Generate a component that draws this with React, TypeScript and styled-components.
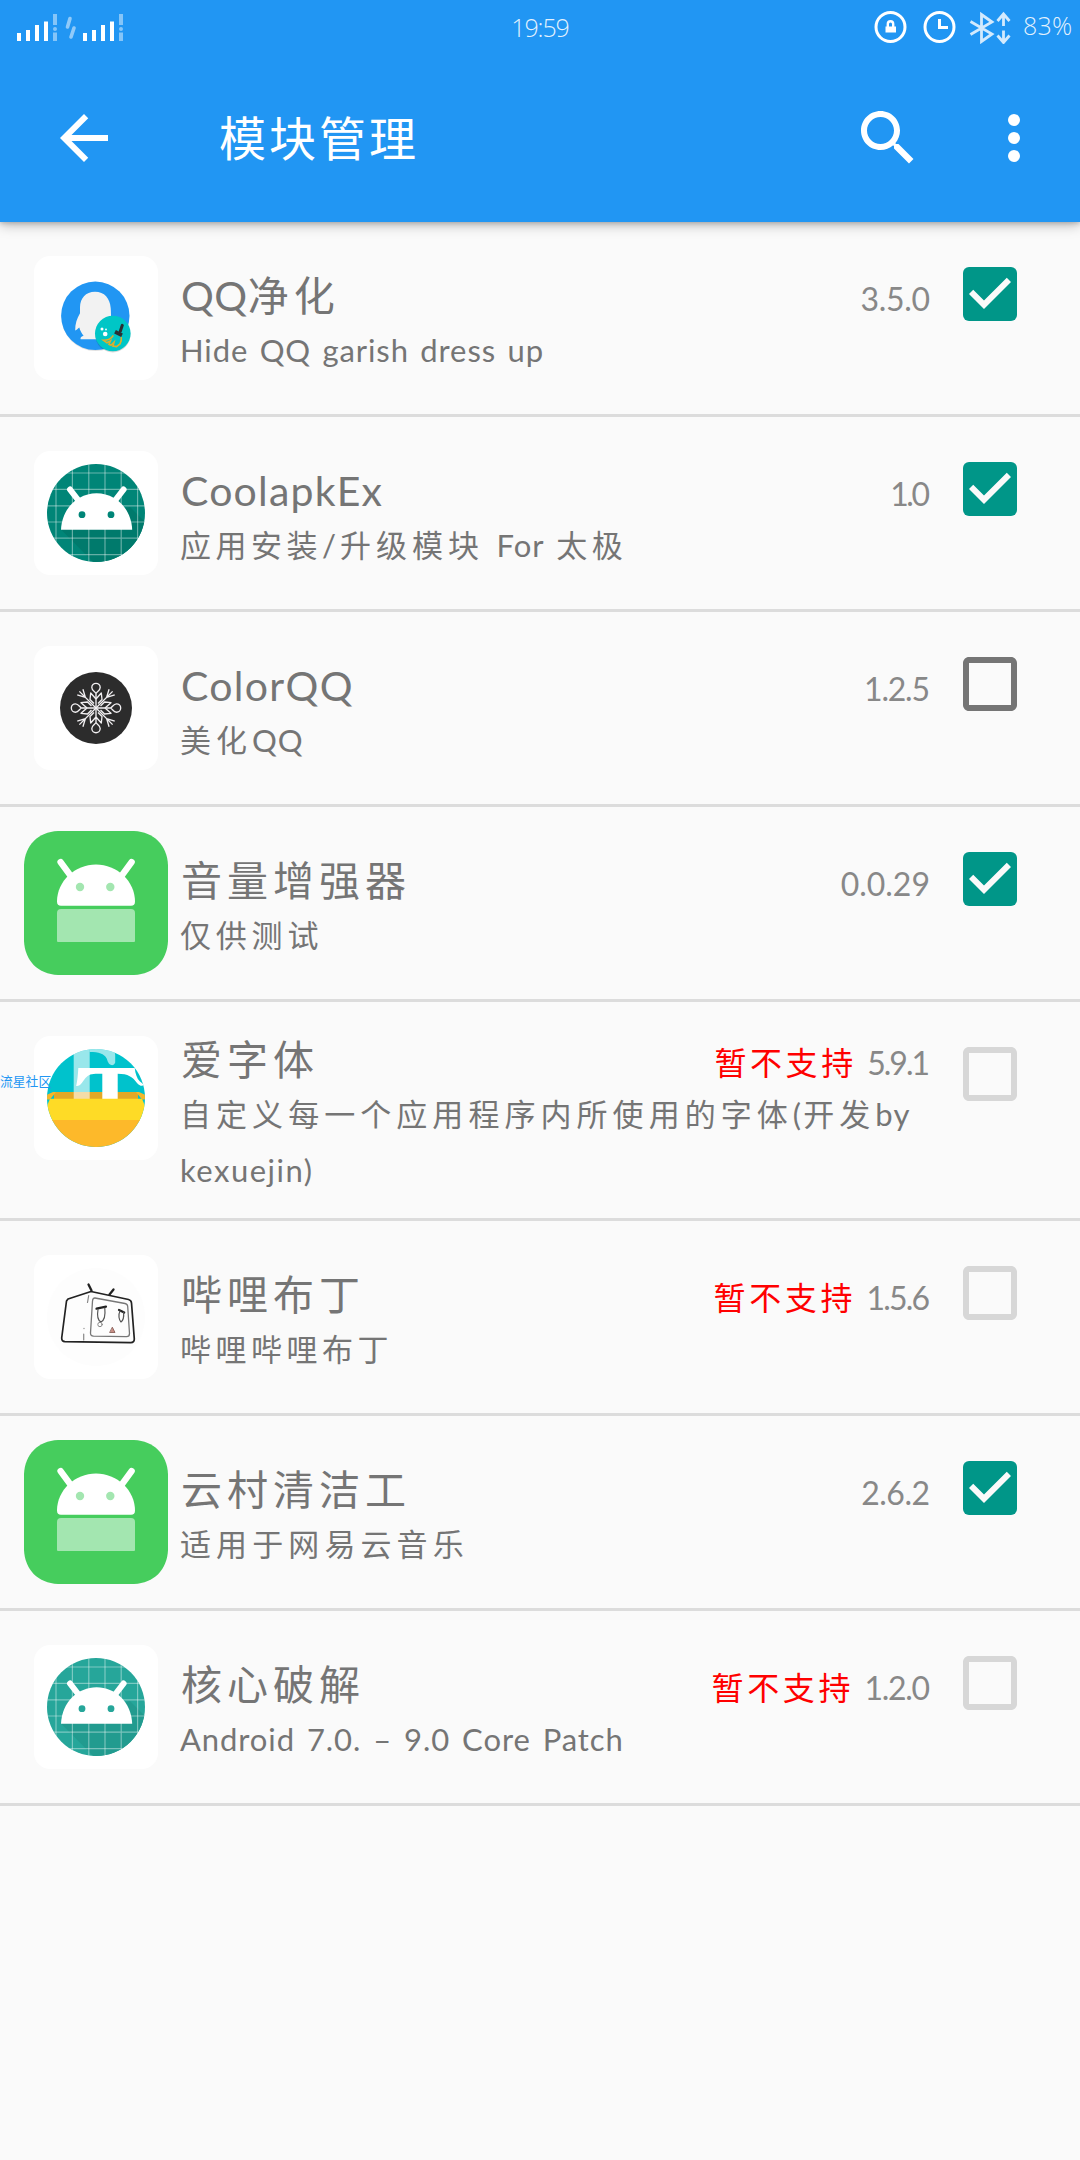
import React from 'react';
import styled, { createGlobalStyle } from 'styled-components';

const GlobalStyle = createGlobalStyle`
  *, *::before, *::after { box-sizing: border-box; }
  html, body { margin: 0; padding: 0; background: #fafafa; }
  body { font-family: 'Lato', 'Noto Sans CJK SC', sans-serif; font-weight: 400; }
  svg { display: block; flex: none; }
`;

const Screen = styled.div`
  width: 1080px;
  min-height: 2160px;
  background: #fafafa;
  display: flex;
  flex-direction: column;
  overflow: hidden;
`;

const Header = styled.header`
  height: 222px;
  background: #2196f3;
  color: #fff;
  box-shadow: 0 3px 12px rgba(0, 0, 0, 0.26), 0 1px 5px rgba(0, 0, 0, 0.2);
  position: relative;
  z-index: 1;
`;

const StatusBar = styled.div`
  height: 54px;
  display: grid;
  grid-template-columns: 1fr auto 1fr;
  align-items: center;
  padding: 0 6px;
`;

const StatusGroup = styled.div<{ $end?: boolean }>`
  display: flex;
  align-items: center;
  justify-content: ${(p) => (p.$end ? 'flex-end' : 'flex-start')};
  padding-left: ${(p) => (p.$end ? 0 : 10)}px;
`;

const StatusText = styled.span<{ $spacing: number }>`
  font-family: 'Open Sans', 'Noto Sans', sans-serif;
  font-weight: 300;
  font-size: 25px;
  letter-spacing: ${(p) => p.$spacing}px;
  line-height: 54px;
  color: rgba(255, 255, 255, 0.88);
`;

const Battery = styled(StatusText)`
  margin: -4px 0 0 11px;
  width: 51px;
  white-space: nowrap;
`;

const Toolbar = styled.div`
  height: 168px;
  display: flex;
  align-items: center;
  padding: 0 30px 0 48px;
`;

const ToolbarTitle = styled.h1`
  flex: 1;
  margin: 0 0 0 99px;
  font-size: 47px;
  font-weight: 400;
  letter-spacing: 3px;
  line-height: 72px;
`;

const IconButton = styled.button<{ $gap?: number }>`
  border: 0;
  padding: 0;
  margin: 0 0 0 ${(p) => p.$gap ?? 0}px;
  background: none;
  color: inherit;
  width: 72px;
  height: 72px;
`;

const List = styled.ul`
  list-style: none;
  margin: 0;
  padding: 0;
`;

const Row = styled.li`
  position: relative;
  display: flex;
  align-items: flex-start;
  min-height: 195px;
  border-bottom: 3px solid #dcdcdc;
  padding-left: 24px;
`;

const IconSlot = styled.div`
  width: 144px;
  height: 144px;
  margin: 24px 0;
  flex: none;
`;

const TextColumn = styled.div`
  align-self: center;
  width: 750px;
  margin-left: 12px;
  padding: 28px 0 20px;
  color: #757575;
`;

const TitleLine = styled.div`
  display: flex;
  align-items: baseline;
  justify-content: space-between;
  height: 56px;
  line-height: 60px;
`;

const Title = styled.span`
  font-size: 41px;
  padding-left: 1px;
`;

const Meta = styled.span`
  display: flex;
  align-items: baseline;
  gap: 14px;
  font-size: 32px;
  white-space: nowrap;
`;

const Warning = styled.span`
  color: #ff0000;
  letter-spacing: 3.600px;
  margin-right: -3.600px;
`;

const Version = styled.span<{ $spacing: number }>`
  color: #888;
  letter-spacing: ${(p) => p.$spacing}px;
  margin-right: ${(p) => -p.$spacing}px;
`;

const Description = styled.p`
  margin: 0;
  font-size: 31px;
`;

const Line = styled.span`
  display: block;
  height: 56px;
  line-height: 56px;
  white-space: pre;
`;

const Run = styled.span<{ $spacing: number; $word?: number }>`
  letter-spacing: ${(p) => p.$spacing}px;
  word-spacing: ${(p) => p.$word ?? 0}px;
`;

const CheckSlot = styled.div`
  width: 72px;
  height: 72px;
  margin: 36px 0 0 24px;
`;

const Watermark = styled.span`
  position: absolute;
  left: 0;
  top: 70px;
  font-size: 12.800px;
  line-height: 18px;
  color: #2196f3;
`;

const Signal = () => (
  <>
    <rect x="1" y="22" width="4" height="8" />
    <rect x="10" y="19" width="4" height="11" />
    <rect x="19" y="14" width="4" height="16" />
    <rect x="28" y="10.5" width="4" height="19.5" />
    <g opacity="0.45">
      <rect x="37" y="3" width="4" height="11" />
      <circle cx="39" cy="18" r="2" />
      <rect x="37" y="21.5" width="4" height="8.5" />
    </g>
  </>
);

const SignalIcons = () => (
  <svg width="112" height="32" viewBox="0 0 112 32" fill="#fff">
    <Signal />
    <path d="M54 7.5 51.500 16M58 17 55 26" stroke="#fff" strokeWidth="3.6" strokeLinecap="round" opacity="0.5" />
    <g transform="translate(66 0)">
      <Signal />
    </g>
  </svg>
);

const StatusIcons = () => (
  <svg width="140" height="34" viewBox="0 0 140 34" fill="none" stroke="#fff">
    <circle cx="18.5" cy="17" r="14.5" strokeWidth="3" />
    <path d="M15.8 17v-3a2.700 2.700 0 0 1 5.400 0v3" strokeWidth="2.4" />
    <rect x="13.5" y="16.5" width="10.5" height="6" fill="#fff" stroke="none" />
    <circle cx="67.5" cy="17" r="14.5" strokeWidth="3" />
    <path d="M67.5 9v8.500h8.500" strokeWidth="3" />
    <g stroke="#d3eafd" strokeWidth="2.8">
      <path d="M98.5 11.500 120 24 109.500 31.500V4.500L120 12 98.500 24.500" />
      <path d="M131.5 16V4.500M125.500 11l6-7 6 7M131.500 20.500V32M125.500 25.500l6 7 6-7" />
    </g>
  </svg>
);

const BackIcon = () => (
  <svg width="72" height="72" viewBox="0 0 24 24" fill="currentColor">
    <path d="M20 11H7.830l5.590-5.590L12 4l-8 8 8 8 1.410-1.410L7.830 13H20v-2z" />
  </svg>
);

const SearchIcon = () => (
  <svg width="72" height="72" viewBox="0 0 24 24" fill="currentColor">
    <path d="M15.500 14h-.79l-.28-.27C15.410 12.590 16 11.110 16 9.500 16 5.910 13.090 3 9.500 3S3 5.910 3 9.500 5.910 16 9.500 16c1.610 0 3.090-.59 4.230-1.570l.27.28v.79l5 4.990L20.490 19l-4.990-5zm-6 0C7.010 14 5 11.990 5 9.500S7.010 5 9.500 5 14 7.010 14 9.500 11.990 14 9.500 14z" />
  </svg>
);

const MoreIcon = () => (
  <svg width="72" height="72" viewBox="0 0 24 24" fill="currentColor">
    <circle cx="12" cy="6" r="2" />
    <circle cx="12" cy="12" r="2" />
    <circle cx="12" cy="18" r="2" />
  </svg>
);

type CheckState = 'on' | 'off' | 'disabled';

const Checkbox = ({ state }: { state: CheckState }) => (
  <svg width="72" height="72" viewBox="0 0 24 24" role="checkbox" aria-checked={state === 'on'}>
    {state === 'on' ? (
      <>
        <rect x="3" y="3" width="18" height="18" rx="2" fill="#009688" />
        <path d="M10 17l-5-5 1.410-1.410L10 14.170l7.590-7.590L19 8z" fill="#fafafa" />
      </>
    ) : (
      <path
        d="M19 5v14H5V5h14m0-2H5c-1.100 0-2 .9-2 2v14c0 1.100.9 2 2 2h14c1.100 0 2-.9 2-2V5c0-1.100-.9-2-2-2z"
        fill={state === 'off' ? '#757575' : '#d7d7d7'}
      />
    )}
  </svg>
);

const Plate = () => <rect x="10" y="10" width="124" height="124" rx="16" fill="#fff" stroke="none" />;

const PenguinIcon = () => (
  <svg width="144" height="144" viewBox="0 0 144 144">
    <Plate />
    <ellipse cx="71.5" cy="71.5" rx="33.8" ry="33.5" fill="#000" opacity="0.12" />
    <circle cx="71.3" cy="69.8" r="34.2" fill="#2196f3" />
    <path d="M71 45.800c-9.500 0-14.800 6.500-15 15.500v6C53 72.500 51 78 51.200 84.500c1.500-.5 2.700-2 4.100-3 1 3.500 2.400 6 4.300 8.300-1.700.5-3.700 1.800-3 3.500h25L87 70.500c0-2 0-5-.3-8.500C86 52.500 80.500 45.800 71 45.800z" fill="#f2f2f2" />
    <circle cx="88.8" cy="88.8" r="17.6" fill="#000" opacity="0.15" />
    <circle cx="88.8" cy="87.5" r="17.8" fill="#00c6c6" />
    <path d="M98.300 79.300l-2 6" stroke="#2b2f33" strokeWidth="3" strokeLinecap="round" />
    <path d="M91 85.800l7 3.400" stroke="#2b2f33" strokeWidth="3.8" />
    <path d="M89.300 89.300c-2 3.500-5.500 5-9.800 5l3.500 2.500 3.500-2-1.500 3.500 2 1 3-3-1 3.700 3.500.6 3.500-2.600c1.300-2.500 1.600-4.500 1.300-6.800" fill="none" stroke="#dfae2c" strokeWidth="1.6" />
    <circle cx="78" cy="83" r="1.5" fill="#fff" />
    <circle cx="82" cy="83.5" r=".9" fill="#fff" />
    <circle cx="81.2" cy="88" r="2.3" fill="#fff" />
  </svg>
);

const gridLines = [32, 48.4, 64.8, 81, 97.2, 113.6];

const DroidGridIcon = ({ color, shade, id }: { color: string; shade: string; id: string }) => (
  <svg width="144" height="144" viewBox="0 0 144 144">
    <clipPath id={id}>
      <circle cx="72" cy="72" r="49" />
    </clipPath>
    <Plate />
    <g clipPath={`url(#${id})`}>
      <rect x="20" y="20" width="104" height="104" fill={color} />
      <path d="M37 88.500 72 124h52V84l-18-18z" fill={shade} />
      {gridLines.map((v) => (
        <path key={v} d={`M${v} 20v104M20 ${v}h104`} stroke="#fff" strokeOpacity="0.4" strokeWidth="1.2" />
      ))}
    </g>
    <path d="M46 48.500l8.500 11M99.600 48.500l-8.500 11" stroke="#fff" strokeWidth="6" strokeLinecap="round" />
    <path d="M37 88.700C38 67 54 52.300 72.600 52.300S107.200 67 108.200 88.700z" fill="#fff" />
    <circle cx="58" cy="73.7" r="3.4" fill={color} />
    <circle cx="87" cy="73.7" r="3.4" fill={color} />
  </svg>
);

const SnowflakeIcon = () => (
  <svg width="144" height="144" viewBox="0 0 144 144">
    <Plate />
    <circle cx="72" cy="72" r="36" fill="#2c2c2c" />
    <g transform="translate(72 72)" fill="none" stroke="#f1eff1" strokeWidth="1.35" strokeLinejoin="round">
      {[0, 90, 180, 270].map((angle) => (
        <g key={angle} transform={`rotate(${angle})`}>
          <path d="M0 0V-14.500C-1-16.500-4.200-17.500-4.200-20.500a4.200 4.200 0 0 1 8.400 0C4.200-17.500 1-16.500 0-14.500" />
          <path d="M0-9-5.300-15-6-8.500-2-4.500M0-9 5.300-15 6-8.500 2-4.500" />
          <g transform="rotate(45)">
            <path d="M0 0V-23.500M0-15-4-22.500M0-15 4-22.500" />
          </g>
        </g>
      ))}
    </g>
  </svg>
);

const DroidGreenIcon = () => (
  <svg width="144" height="144" viewBox="0 0 144 144">
    <path d="M34 0H110C130 1 143 14 144 34V110C143 130 130 143 110 144H34C14 143 1 130 0 110V34C1 14 14 1 34 0z" fill="#46cd5d" />
    <path d="M36.600 31.200l11 15M107.600 31.200l-11 15" stroke="#fff" strokeWidth="6.4" strokeLinecap="round" />
    <path d="M37 74.700a4 4 0 0 1-4-4C33 50 51 33.500 72 33.500S111 50 111 70.700a4 4 0 0 1-4 4z" fill="#fff" />
    <circle cx="56" cy="56" r="4.2" fill="#a3e6b0" />
    <circle cx="86.3" cy="56" r="4.2" fill="#a3e6b0" />
    <path d="M33 82a4 4 0 0 1 4-4h70a4 4 0 0 1 4 4v28a1 1 0 0 1-1 1H34a1 1 0 0 1-1-1z" fill="#a3e6b0" />
  </svg>
);

const FontBoxIcon = () => (
  <svg width="144" height="144" viewBox="0 0 144 144">
    <clipPath id="fontbox">
      <circle cx="72" cy="72" r="49" />
    </clipPath>
    <Plate />
    <g clipPath="url(#fontbox)">
      <rect x="20" y="20" width="104" height="104" fill="#00c2cc" />
      <rect x="30" y="66" width="84" height="8" fill="#e3a826" />
      <path d="M20 70l9-4h3l-6 7.500h-6zM124 70l-9-4h-3l6 7.500h6z" fill="#f5b72a" />
      <path d="M49.700 20h16V73h-16z" fill="#fff" opacity="0.6" />
      <path d="M65.700 20H82c6 2 9 5 9.200 9v7.500c-.5 2-2.500 3-4 2.500-3-1-3.500-4-4.500-6.500C80 27.500 75 26 65.700 26z" fill="#fff" opacity="0.6" />
      <path d="M54.300 42H110.700c.7 6 2.300 10.500 5 13.300l4.300 3.500c-1.500 1.800-4.500 1.200-7-1.800C109 51 104 47.700 93.700 47.700V73.200H78.300V47.700c-6 0-9-.2-12 .8-4 1.500-6 5-8.500 8.500-1.500 2.200-3.500 3.300-5.600 3C53.500 54 54 48 54.300 42z" fill="#fff" />
      <path d="M26 72.700h92l3.500 8.500V95h-99V81.200z" fill="#fedb26" />
      <rect x="20" y="94" width="104" height="30" fill="#fdb92a" />
    </g>
  </svg>
);

const TvIcon = () => (
  <svg width="144" height="144" viewBox="0 0 144 144" fill="none" stroke="#222" strokeLinecap="round" strokeLinejoin="round">
    <Plate />
    <circle cx="72" cy="72" r="49" fill="#fdfdfd" stroke="none" />
    <path d="M44 54 67 46.500 104.500 54.500q2.800.8 3 3.500L110.300 94q0 3.500-3.500 3.700L41 96.700q-3.400-.3-3.300-3.700L42.500 56z" strokeWidth="1.7" />
    <path d="M64.500 39.500l3 6M89.500 44.500l-4 5" strokeWidth="2.3" />
    <path d="M71 53l30 5.500q2.500.5 2.700 3l1.800 27q0 3.200-3 3.200l-33-.6q-3.200-.2-3-3.200l2-31.900q.3-3.200 2.500-3z" stroke="#777" strokeWidth="1.3" />
    <path d="M72.500 63.700l9.500-2M95 65l5.200 2.500" strokeWidth="2.2" />
    <path d="M74 64.500c-1 6 0 11 3 12.500 3-1.500 4.500-7 3.800-14M96 66c-2 4-1 9 1 11 2-1.500 3-6 2.500-10" stroke="#555" strokeWidth="1.2" />
    <circle cx="76" cy="79.5" r="2.2" stroke="#888" strokeWidth="1" />
    <path d="M88.500 82.500l2.500 5h-5z" fill="#c98f85" stroke="#80554e" strokeWidth="0.8" />
    <path d="M64.700 50.500l-1.200 7M60 83.300v.3M59.700 89v6" stroke="#888" strokeWidth="1.2" />
  </svg>
);

interface Part {
  text: string;
  spacing: number;
  word?: number;
}

interface Module {
  icon: React.ReactNode;
  title: Part[];
  description: Part[][];
  version: string;
  versionSpacing: number;
  state: CheckState;
  watermark?: string;
}

const modules: Module[] = [
  {
    icon: <PenguinIcon />,
    title: [{ text: 'QQ', spacing: 0.5 }, { text: '净化', spacing: 5 }],
    description: [[{ text: 'Hide QQ garish dress up', spacing: 0.9, word: 2.6 }]],
    version: '3.5.0', versionSpacing: -0.3, state: 'on',
  },
  {
    icon: <DroidGridIcon id="droid-dark" color="#008577" shade="#007a6c" />,
    title: [{ text: 'CoolapkEx', spacing: 1.2 }],
    description: [[
      { text: '应用安装', spacing: 4.5 }, { text: '/', spacing: 4 }, { text: '升级模块', spacing: 5 },
      { text: ' For ', spacing: 1, word: 3.5 }, { text: '太极', spacing: 4.5 },
    ]],
    version: '1.0', versionSpacing: -2.5, state: 'on',
  },
  {
    icon: <SnowflakeIcon />,
    title: [{ text: 'ColorQQ', spacing: 1.3 }],
    description: [[{ text: '美化', spacing: 5 }, { text: 'QQ', spacing: 1 }]],
    version: '1.2.5', versionSpacing: -1.2, state: 'off',
  },
  {
    icon: <DroidGreenIcon />,
    title: [{ text: '音量增强器', spacing: 5 }],
    description: [[{ text: '仅供测试', spacing: 4.8 }]],
    version: '0.0.29', versionSpacing: 0, state: 'on',
  },
  {
    icon: <FontBoxIcon />,
    title: [{ text: '爱字体', spacing: 5 }],
    description: [
      [
        { text: '自定义每一个应用程序内所使用的字体', spacing: 5.05 }, { text: '(', spacing: 2 },
        { text: '开发', spacing: 5 }, { text: 'by', spacing: 1.5 },
      ],
      [{ text: 'kexuejin)', spacing: 1.5 }],
    ],
    version: '5.9.1', versionSpacing: -2, state: 'disabled', watermark: '流星社区',
  },
  {
    icon: <TvIcon />,
    title: [{ text: '哔哩布丁', spacing: 5 }],
    description: [[{ text: '哔哩哔哩布丁', spacing: 4.5 }]],
    version: '1.5.6', versionSpacing: -1.8, state: 'disabled',
  },
  {
    icon: <DroidGreenIcon />,
    title: [{ text: '云村清洁工', spacing: 5 }],
    description: [[{ text: '适用于网易云音乐', spacing: 5.1 }]],
    version: '2.6.2', versionSpacing: -0.5, state: 'on',
  },
  {
    icon: <DroidGridIcon id="droid-light" color="#26a69a" shade="#229b8f" />,
    title: [{ text: '核心破解', spacing: 5 }],
    description: [[{ text: 'Android 7.0. – 9.0 Core Patch', spacing: 0.9, word: 3.2 }]],
    version: '1.2.0', versionSpacing: -1.3, state: 'disabled',
  },
];

const Parts = ({ parts }: { parts: Part[] }) => (
  <>
    {parts.map((part, i) => (
      <Run key={i} $spacing={part.spacing} $word={part.word}>
        {part.text}
      </Run>
    ))}
  </>
);

const ModuleRow = ({ module }: { module: Module }) => (
  <Row>
    <IconSlot>{module.icon}</IconSlot>
    <TextColumn>
      <TitleLine>
        <Title>
          <Parts parts={module.title} />
        </Title>
        <Meta>
          {module.state === 'disabled' && <Warning>暂不支持</Warning>}
          <Version $spacing={module.versionSpacing}>{module.version}</Version>
        </Meta>
      </TitleLine>
      <Description>
        {module.description.map((line, i) => (
          <Line key={i}>
            <Parts parts={line} />
          </Line>
        ))}
      </Description>
    </TextColumn>
    <CheckSlot>
      <Checkbox state={module.state} />
    </CheckSlot>
    {module.watermark && <Watermark>{module.watermark}</Watermark>}
  </Row>
);

export default function App() {
  return (
    <Screen>
      <GlobalStyle />
      <Header>
        <StatusBar>
          <StatusGroup>
            <SignalIcons />
          </StatusGroup>
          <StatusText $spacing={-1.1}>19:59</StatusText>
          <StatusGroup $end>
            <StatusIcons />
            <Battery $spacing={0.2}>83%</Battery>
          </StatusGroup>
        </StatusBar>
        <Toolbar>
          <IconButton aria-label="返回">
            <BackIcon />
          </IconButton>
          <ToolbarTitle>模块管理</ToolbarTitle>
          <IconButton aria-label="搜索">
            <SearchIcon />
          </IconButton>
          <IconButton aria-label="更多" $gap={54}>
            <MoreIcon />
          </IconButton>
        </Toolbar>
      </Header>
      <List>
        {modules.map((module, i) => (
          <ModuleRow key={i} module={module} />
        ))}
      </List>
    </Screen>
  );
}
